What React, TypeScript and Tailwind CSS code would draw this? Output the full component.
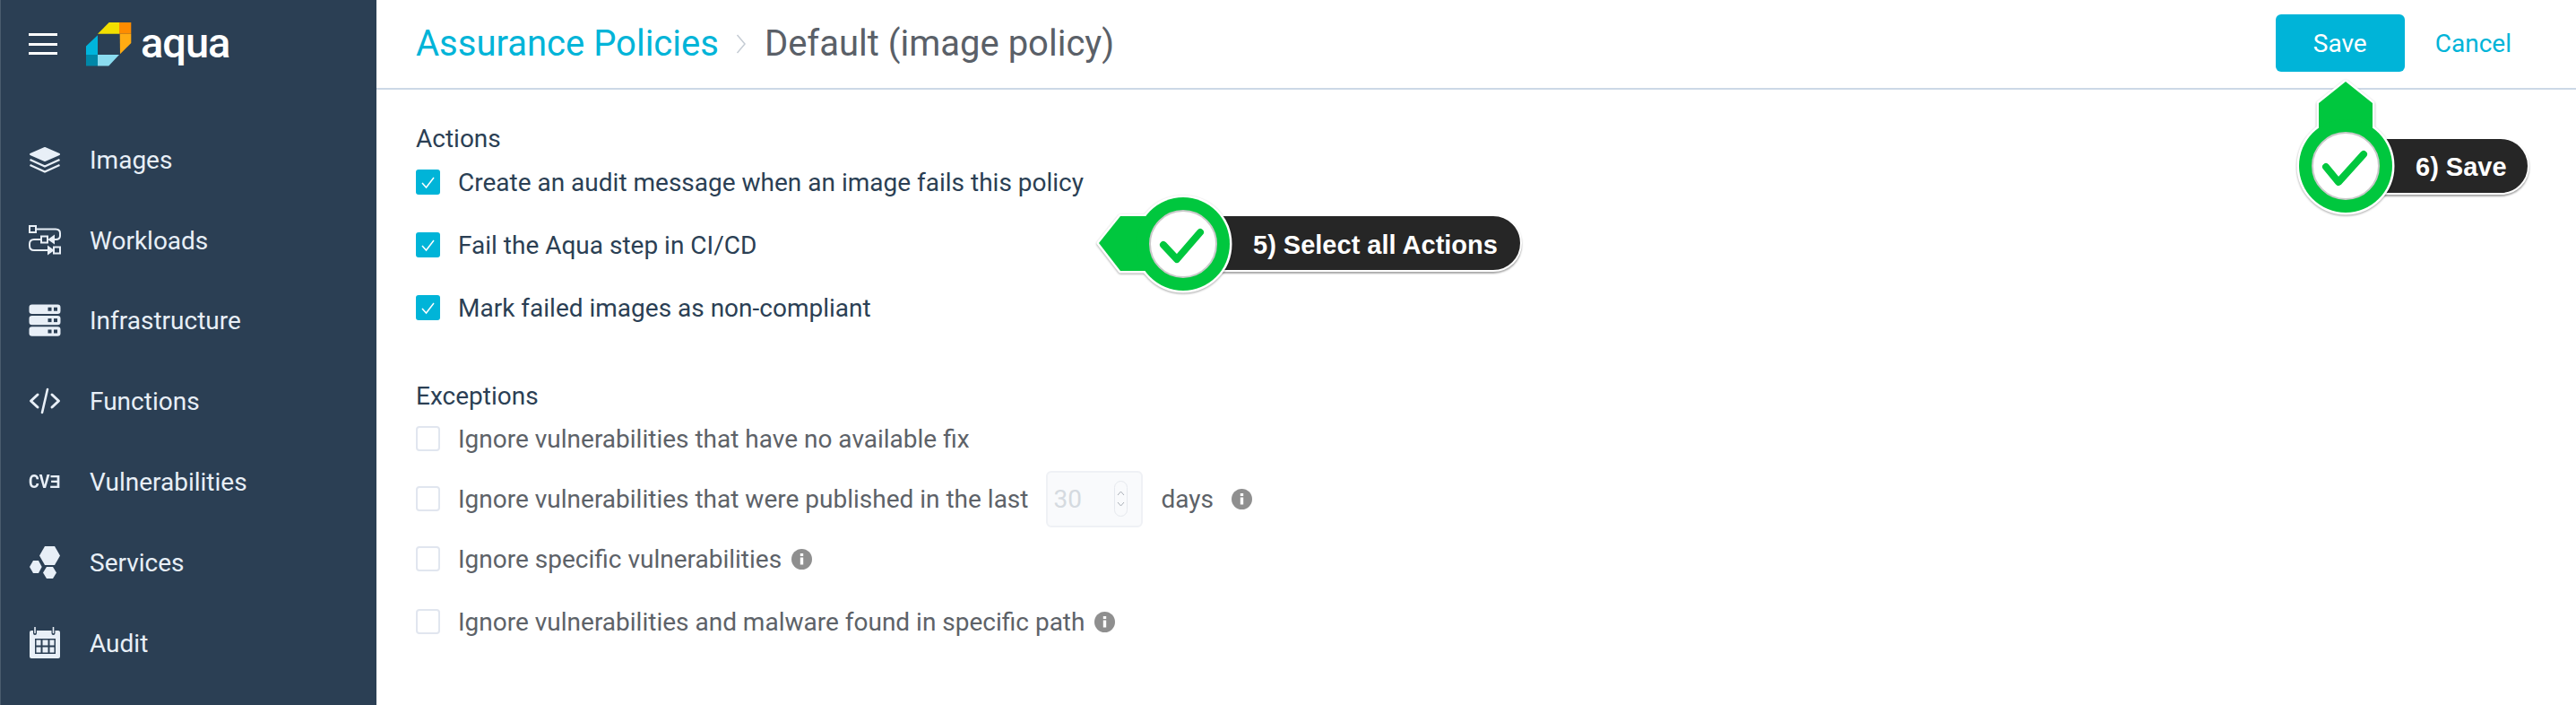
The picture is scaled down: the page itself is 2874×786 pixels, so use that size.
const NAV = [
  { name: "Images", icon: <LayersIcon /> },
  { name: "Workloads", icon: <WorkloadsIcon /> },
  { name: "Infrastructure", icon: <ServersIcon /> },
  { name: "Functions", icon: <CodeIcon /> },
  { name: "Vulnerabilities", icon: <span className="font-['Roboto',sans-serif] text-[20px] font-bold leading-none scale-x-90 whitespace-nowrap">CVƎ</span> },
  { name: "Services", icon: <HexIcon /> },
  { name: "Audit", icon: <CalendarIcon /> },
];

function LayersIcon() {
  return (
    <svg width="36" height="30" viewBox="0 0 36 30" fill="none" stroke="#e8eff7" strokeLinejoin="round">
      <path d="M18 2L34 9L18 16L2 9Z" fill="#e8eff7" strokeWidth="2" />
      <path d="M1.5 15L18 22.5L34.5 15" strokeWidth="2.4" />
      <path d="M1.5 21L18 28.5L34.5 21" strokeWidth="2.4" />
    </svg>
  );
}

function WorkloadsIcon() {
  return (
    <svg width="36" height="34" viewBox="0 0 36 34" fill="none" stroke="#e8eff7" strokeWidth="2">
      <rect x="1" y="1" width="7" height="7" />
      <path d="M8 4.5H30Q35 4.5 35 9V12Q35 16 30 16H25" />
      <path d="M23 16L28 12.5V19.5Z" fill="#e8eff7" />
      <rect x="14" y="12.5" width="7" height="7" />
      <path d="M14 16H6Q1 16 1 21V23Q1 28 6 28H23" />
      <path d="M27 28L22 24.5V31.5Z" fill="#e8eff7" />
      <rect x="28" y="24.5" width="7" height="7" />
    </svg>
  );
}

function ServersIcon() {
  return (
    <svg width="36" height="36" viewBox="0 0 36 36" fill="#e8eff7">
      {[0, 12.4, 24.8].map((y) => (
        <g key={y}>
          <rect x="0.5" y={y + 0.5} width="35" height="10.4" rx="3.2" />
          <rect x="21.5" y={y + 3.7} width="4" height="4" fill="#2b3f54" />
          <rect x="28" y={y + 3.7} width="4" height="4" fill="#2b3f54" />
        </g>
      ))}
    </svg>
  );
}

function CodeIcon() {
  return (
    <svg width="36" height="30" viewBox="0 0 36 30" fill="none" stroke="#e8eff7" strokeWidth="3" strokeLinecap="round" strokeLinejoin="round">
      <path d="M10 8L2.5 15L10 22" />
      <path d="M26 8L33.5 15L26 22" />
      <path d="M21 2L15 28" strokeWidth="2.6" />
    </svg>
  );
}

function HexIcon() {
  return (
    <svg width="36" height="38" viewBox="0 0 36 38" fill="#e8eff7">
      <path d="M18 1H29L35 11.500L29 22H18L12 11.500Z" />
      <path d="M5 17H11L14.700 24L11 31H5L1 24Z" />
      <path d="M20 24H27L31 30.500L27 37H20L16 30.500Z" />
    </svg>
  );
}

function CalendarIcon() {
  return (
    <svg width="36" height="36" viewBox="0 0 36 36" fill="#e8eff7">
      <path d="M3 4H33Q35 4 35 6V33Q35 35 33 35H3Q1 35 1 33V6Q1 4 3 4Z" />
      <path d="M7 13H30V30H7Z" fill="#2b3f54" />
      <path d="M8.500 17.500V14.500H13.500V20.500H8.500ZM15.500 14.500H21.500V20.500H15.500ZM23.500 14.500H28.500V20.500H23.500ZM8.500 22.500H13.500V28.500H8.500ZM15.500 22.500H21.500V28.500H15.500ZM23.500 22.500H28.500V28.500H23.500Z" />
      <path d="M7 0.500V7M27.500 0.500V7" stroke="#2b3f54" strokeWidth="4" strokeLinecap="round" />
      <path d="M7 0.500V6.500M27.500 0.500V6.500" stroke="#e8eff7" strokeWidth="1.6" strokeLinecap="round" />
    </svg>
  );
}

function Logo() {
  return (
    <svg width="52" height="50" viewBox="96 33 52 50">
      <path d="M109 46.700L121.700 34H133V46.700Z" fill="#f2df00" />
      <path d="M133 34H146.300V46.700H133Z" fill="#ff8c00" />
      <path d="M133.700 46.700H146.300V57L134 69.300Z" fill="#ffab12" />
      <path d="M109 48.300V70H96V60.500Z" fill="#00b4dc" />
      <path d="M96 70H109V82.500H96Z" fill="#0087a8" />
      <path d="M109 70H133L121.300 82.500H109Z" fill="#8bdcf0" />
    </svg>
  );
}

function Check({ on }: { on?: boolean }) {
  if (!on) {
    return <div className="w-[27px] h-[28px] rounded-[4px] border-2 border-[#e1e6ef] bg-white shrink-0" />;
  }
  return (
    <div className="w-[27px] h-[28px] rounded-[3px] bg-[#00b4d8] shrink-0 flex items-center justify-center">
      <svg width="17" height="15" viewBox="0 0 17 15" fill="none" stroke="#fff" strokeWidth="1.500">
        <path d="M2 8L6.500 13L15 2" />
      </svg>
    </div>
  );
}

function Info() {
  return (
    <svg width="23" height="23" viewBox="0 0 23 23" className="shrink-0">
      <circle cx="11.500" cy="11.500" r="11.500" fill="#8f8f8f" />
      <rect x="9.800" y="9.500" width="3.400" height="8" fill="#fff" />
      <rect x="9.800" y="5" width="3.400" height="3" fill="#fff" />
    </svg>
  );
}

function Pin5() {
  return (
    <svg width="170" height="130" viewBox="1215 205 170 130" className="absolute left-[1215px] top-[205px] drop-shadow-[0_1px_1px_rgba(0,0,0,0.35)]">
      <g fill="#fff" stroke="#fff" strokeWidth="5" strokeLinejoin="round">
        <path d="M1226 271L1250 241H1300V302H1250Z" />
        <circle cx="1320" cy="272" r="52" />
      </g>
      <g fill="#00c73e">
        <path d="M1226 271L1250 241H1300V302H1250Z" />
        <circle cx="1320" cy="272" r="52" />
      </g>
      <circle cx="1320" cy="272" r="37" fill="#fff" stroke="#c9c9c9" strokeWidth="2" />
      <path d="M1298 273L1313 289L1339 259" fill="none" stroke="#00c73e" strokeWidth="8" strokeLinecap="round" strokeLinejoin="round" />
    </svg>
  );
}

function Pin6() {
  return (
    <svg width="130" height="160" viewBox="2552 85 130 160" className="absolute left-[2552px] top-[85px] drop-shadow-[0_1px_1px_rgba(0,0,0,0.35)]">
      <g fill="#fff" stroke="#fff" strokeWidth="5" strokeLinejoin="round">
        <path d="M2617 91L2647 115V160H2587V115Z" />
        <circle cx="2617" cy="185" r="52" />
      </g>
      <g fill="#00c73e">
        <path d="M2617 91L2647 115V160H2587V115Z" />
        <circle cx="2617" cy="185" r="52" />
      </g>
      <circle cx="2617" cy="185" r="37" fill="#fff" stroke="#c9c9c9" strokeWidth="2" />
      <path d="M2595 186L2609 203L2637 172" fill="none" stroke="#00c73e" strokeWidth="8" strokeLinecap="round" strokeLinejoin="round" />
    </svg>
  );
}

export default function App() {
  return (
    <div className="relative flex h-[786px] w-[2874px] overflow-hidden bg-white font-['Roboto',sans-serif]">
      <aside className="w-[420px] shrink-0 bg-[#2b3f54] border-l border-[#4a5b6d] text-[#e8eff7]">
        <div className="flex items-center h-[98px] pl-[31px]">
          <div className="w-[32px] flex flex-col gap-[7.500px]">
            <div className="h-[3px] bg-white" />
            <div className="h-[3px] bg-white" />
            <div className="h-[3px] bg-white" />
          </div>
          <div className="ml-[32px] flex items-center">
            <Logo />
            <span className="ml-[9px] -mt-[3px] text-[47px] leading-none font-medium text-white tracking-[-1px]">aqua</span>
          </div>
        </div>
        <nav className="pt-[35px]">
          {NAV.map((item) => (
            <div key={item.name} className="flex items-center h-[89.800px] pl-[31px]">
              <div className="w-[36px] flex justify-center shrink-0">{item.icon}</div>
              <span className="ml-[32px] pt-[2px] text-[28px]">{item.name}</span>
            </div>
          ))}
        </nav>
      </aside>

      <main className="flex-1">
        <header className="flex items-center h-[100px] border-b-2 border-[#ccd8e6] pl-[44px] pr-[72px]">
          <span className="text-[40px] text-[#00b4d8]">Assurance Policies</span>
          <svg width="12" height="22" viewBox="0 0 12 22" fill="none" stroke="#c5ccd4" strokeWidth="1.500" className="ml-[19px]">
            <path d="M1.500 1L10 11L1.500 21" />
          </svg>
          <span className="ml-[20px] text-[40px] text-[#5a6068]">Default (image policy)</span>
          <button className="ml-auto w-[144px] h-[64px] -mt-[3px] pt-[2px] rounded-[6px] bg-[#00b4d8] text-white text-[28px]">Save</button>
          <span className="ml-[34px] -mt-[1px] text-[28px] text-[#00b4d8]">Cancel</span>
        </header>

        <section className="pl-[44px] pt-[40px] text-[28px] [&_span]:pt-[2px]">
          <div className="h-[28px] pt-[1px] flex items-center text-[#2b3f54]">Actions</div>
          <div className="text-[#2b3f54]">
            <div className="flex items-center h-[70px] gap-[20px]">
              <Check on />
              <span>Create an audit message when an image fails this policy</span>
            </div>
            <div className="flex items-center h-[70px] gap-[20px]">
              <Check on />
              <span>Fail the Aqua step in CI/CD</span>
            </div>
            <div className="flex items-center h-[70px] gap-[20px]">
              <Check on />
              <span>Mark failed images as non-compliant</span>
            </div>
          </div>

          <div className="mt-[49px] h-[28px] pt-[1px] flex items-center text-[#2b3f54]">Exceptions</div>
          <div className="text-[#5d6268]">
            <div className="flex items-center h-[68px] gap-[20px]">
              <Check />
              <span>Ignore vulnerabilities that have no available fix</span>
            </div>
            <div className="flex items-center h-[66px] gap-[20px]">
              <Check />
              <span>Ignore vulnerabilities that were published in the last</span>
              <div className="flex items-center w-[108px] h-[63px] rounded-[6px] border-2 border-[#eff1f5] bg-[#f9fafc] pl-[6px] text-[#d5dae0]">
                <span className="flex-1">30</span>
                <div className="mr-[15px] w-[15px] h-[40px] rounded-full border border-[#e6e9ee] flex flex-col items-center justify-center gap-[6px]">
                  <svg width="9" height="6" viewBox="0 0 9 6" fill="none" stroke="#a9afb7"><path d="M1 5L4.500 1L8 5" /></svg>
                  <svg width="9" height="6" viewBox="0 0 9 6" fill="none" stroke="#a9afb7"><path d="M1 1L4.500 5L8 1" /></svg>
                </div>
              </div>
              <span>days</span>
              <Info />
            </div>
            <div className="flex items-center h-[68px] gap-[20px]">
              <Check />
              <span>Ignore specific vulnerabilities</span>
              <div className="-ml-[9px]"><Info /></div>
            </div>
            <div className="flex items-center h-[72px] gap-[20px]">
              <Check />
              <span>Ignore vulnerabilities and malware found in specific path</span>
              <div className="-ml-[9px]"><Info /></div>
            </div>
          </div>
        </section>
      </main>

      {/* annotation callouts over the page */}
      <div className="absolute left-[1338px] top-[239px] w-[360px] h-[64px] pt-[6px] rounded-r-[32px] bg-[#262626] border-2 border-white shadow-[0_2px_2px_rgba(0,0,0,0.35)] flex items-center pl-[58px] font-['Liberation_Sans',sans-serif] font-bold text-[29px] text-white">
        5) Select all Actions
      </div>
      <Pin5 />
      <div className="absolute left-[2638px] top-[153px] w-[184px] h-[64px] pt-[3px] rounded-r-[32px] bg-[#262626] border-2 border-white shadow-[0_2px_2px_rgba(0,0,0,0.35)] flex items-center pl-[55px] font-['Liberation_Sans',sans-serif] font-bold text-[29px] text-white">
        6) Save
      </div>
      <Pin6 />
    </div>
  );
}
